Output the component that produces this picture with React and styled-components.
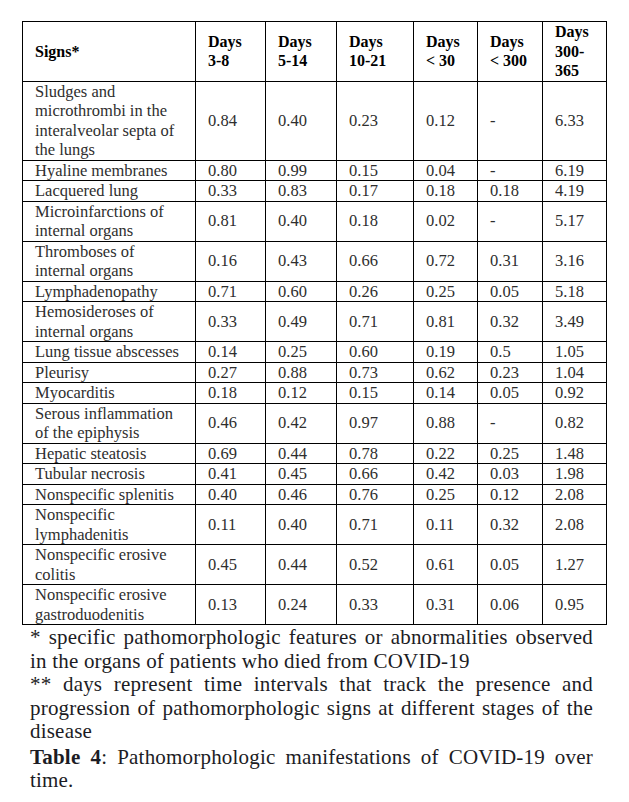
import React from "react";
import styled, { createGlobalStyle } from "styled-components";

const GlobalStyle = createGlobalStyle`
  html, body {
    margin: 0;
    padding: 0;
    background: #ffffff;
  }
`;

const Page = styled.div`
  width: 629px;
  min-height: 802px;
  padding: 21px 0 0 22px;
  box-sizing: border-box;
  font-family: "Liberation Serif", "Times New Roman", serif;
`;

const Table = styled.table`
  width: 584px;
  border-collapse: collapse;
  table-layout: fixed;
  font-size: 16.5px;
  line-height: 19.5px;
  color: #2e2e2e;
`;

const HeadCell = styled.th`
  border: 1px solid #000;
  padding: 0 0 0 12px;
  text-align: left;
  vertical-align: middle;
  font-weight: 700;
  font-size: 16px;
  color: #000;
  white-space: nowrap;
`;

const Cell = styled.td`
  border: 1px solid #000;
  padding: 0 0 0 12px;
  text-align: left;
  vertical-align: middle;
  white-space: nowrap;
`;

const Notes = styled.div`
  width: 563px;
  margin: 1px 0 0 8px;
  font-size: 21px;
  line-height: 23.5px;
  letter-spacing: 0.2px;
  color: #1c1c24;
`;

const Note = styled.p`
  margin: ${(p) => (p.$caption ? "2px 0 0" : "0")};
  text-align: justify;
`;

const Strong = styled.b`
  font-weight: 700;
`;

const widths = [173, 70, 71, 77, 64, 65, 64];

const headers = [
  ["Signs*"],
  ["Days", "3-8"],
  ["Days", "5-14"],
  ["Days", "10-21"],
  ["Days", "< 30"],
  ["Days", "< 300"],
  ["Days", "300-", "365"],
];

const rows = [
  [["Sludges and", "microthrombi in the", "interalveolar septa of", "the lungs"], "0.84", "0.40", "0.23", "0.12", "-", "6.33"],
  [["Hyaline membranes"], "0.80", "0.99", "0.15", "0.04", "-", "6.19"],
  [["Lacquered lung"], "0.33", "0.83", "0.17", "0.18", "0.18", "4.19"],
  [["Microinfarctions of", "internal organs"], "0.81", "0.40", "0.18", "0.02", "-", "5.17"],
  [["Thromboses of", "internal organs"], "0.16", "0.43", "0.66", "0.72", "0.31", "3.16"],
  [["Lymphadenopathy"], "0.71", "0.60", "0.26", "0.25", "0.05", "5.18"],
  [["Hemosideroses of", "internal organs"], "0.33", "0.49", "0.71", "0.81", "0.32", "3.49"],
  [["Lung tissue abscesses"], "0.14", "0.25", "0.60", "0.19", "0.5", "1.05"],
  [["Pleurisy"], "0.27", "0.88", "0.73", "0.62", "0.23", "1.04"],
  [["Myocarditis"], "0.18", "0.12", "0.15", "0.14", "0.05", "0.92"],
  [["Serous inflammation", "of the epiphysis"], "0.46", "0.42", "0.97", "0.88", "-", "0.82"],
  [["Hepatic steatosis"], "0.69", "0.44", "0.78", "0.22", "0.25", "1.48"],
  [["Tubular necrosis"], "0.41", "0.45", "0.66", "0.42", "0.03", "1.98"],
  [["Nonspecific splenitis"], "0.40", "0.46", "0.76", "0.25", "0.12", "2.08"],
  [["Nonspecific", "lymphadenitis"], "0.11", "0.40", "0.71", "0.11", "0.32", "2.08"],
  [["Nonspecific erosive", "colitis"], "0.45", "0.44", "0.52", "0.61", "0.05", "1.27"],
  [["Nonspecific erosive", "gastroduodenitis"], "0.13", "0.24", "0.33", "0.31", "0.06", "0.95"],
];

const Lines = ({ lines }) =>
  lines.map((l, i) => (
    <React.Fragment key={i}>
      {i > 0 && <br />}
      {l}
    </React.Fragment>
  ));

export default function App() {
  return (
    <Page>
      <GlobalStyle />
      <Table>
        <colgroup>
          {widths.map((w, i) => (
            <col key={i} style={{ width: w }} />
          ))}
        </colgroup>
        <thead>
          <tr>
            {headers.map((h, i) => (
              <HeadCell key={i}>
                <Lines lines={h} />
              </HeadCell>
            ))}
          </tr>
        </thead>
        <tbody>
          {rows.map(([sign, ...vals], r) => (
            <tr key={r}>
              <Cell>
                <Lines lines={sign} />
              </Cell>
              {vals.map((v, i) => (
                <Cell key={i}>{v}</Cell>
              ))}
            </tr>
          ))}
        </tbody>
      </Table>
      <Notes>
        <Note>
          * specific pathomorphologic features or abnormalities observed in the
          organs of patients who died from COVID-19
        </Note>
        <Note>
          ** days represent time intervals that track the presence and
          progression of pathomorphologic signs at different stages of the
          disease
        </Note>
        <Note $caption>
          <Strong>Table 4</Strong>: Pathomorphologic manifestations of COVID-19
          over time.
        </Note>
      </Notes>
    </Page>
  );
}
